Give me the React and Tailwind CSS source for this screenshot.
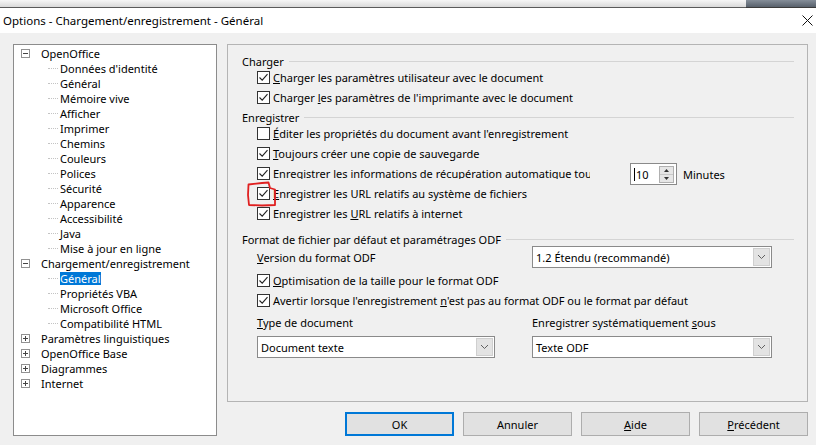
import React from "react";

function Check({ on }) {
  return (
    <span className="w-[13px] h-[13px] border border-[#333333] bg-white flex items-center justify-center shrink-0">
      {on && (
        <svg width="11" height="11" viewBox="0 0 11 11">
          <path d="M1.5 5.5 L4.2 8.2 L9.5 2.2" fill="none" stroke="#222" strokeWidth="1.1" />
        </svg>
      )}
    </span>
  );
}

function Row({ on, children, mt = "" }) {
  return (
    <div className={`h-[20px] flex items-center gap-[3px] pl-[15px] ${mt}`}>
      <Check on={on} />
      <span className="whitespace-nowrap">{children}</span>
    </div>
  );
}

function Group({ title, mt = "" }) {
  return (
    <div className={`h-[14px] flex items-center pr-[13px] ${mt}`}>
      <span className="whitespace-nowrap">{title}</span>
      <div className="flex-1 h-px bg-[#d4d4d4] ml-[5px]" />
    </div>
  );
}

function Chevron() {
  return (
    <svg width="9" height="6" viewBox="0 0 9 6">
      <path d="M1 1 L4.5 4.5 L8 1" fill="none" stroke="#606060" strokeWidth="1" />
    </svg>
  );
}

function Select({ value, w }) {
  return (
    <div className={`${w} h-[22px] border border-[#8a8a8a] bg-white flex items-center`}>
      <span className="flex-1 pl-[3px] whitespace-nowrap">{value}</span>
      <span className="w-[17px] h-[18px] mr-[1px] bg-[#e3e3e3] border border-[#cfcfcf] flex items-center justify-center">
        <Chevron />
      </span>
    </div>
  );
}

function Expander({ open }) {
  return (
    <span className="w-[9px] h-[9px] border border-[#919191] bg-white relative shrink-0 flex items-center justify-center">
      <span className="w-[5px] h-px bg-[#444]" />
      {!open && <span className="absolute w-px h-[5px] bg-[#444]" />}
    </span>
  );
}

const tree = [
  { t: "OpenOffice", top: true, open: true },
  { t: "Données d'identité" },
  { t: "Général" },
  { t: "Mémoire vive" },
  { t: "Afficher" },
  { t: "Imprimer" },
  { t: "Chemins" },
  { t: "Couleurs" },
  { t: "Polices" },
  { t: "Sécurité" },
  { t: "Apparence" },
  { t: "Accessibilité" },
  { t: "Java" },
  { t: "Mise à jour en ligne" },
  { t: "Chargement/enregistrement", top: true, open: true },
  { t: "Général", sel: true },
  { t: "Propriétés VBA" },
  { t: "Microsoft Office" },
  { t: "Compatibilité HTML" },
  { t: "Paramètres linguistiques", top: true },
  { t: "OpenOffice Base", top: true },
  { t: "Diagrammes", top: true },
  { t: "Internet", top: true },
];

function Btn({ children, primary }) {
  return (
    <button
      className={`w-[109px] h-[24px] bg-[#e1e1e1] flex items-center justify-center ${
        primary ? "border-2 border-[#0078d7]" : "border border-[#adadad]"
      }`}
    >
      {children}
    </button>
  );
}

export default function App() {
  return (
    <div className="w-[816px] h-[445px] bg-[#f0f0f0] font-['Noto_Sans','Open_Sans',sans-serif] text-[11px] text-black relative overflow-hidden leading-none">
      {/* top strip */}
      <div className="h-[8px] flex">
        <div className="flex-1 bg-gradient-to-b from-[#f6f6f6] to-[#d9d9d9] border-b border-[#5a5a5a]" />
        <div className="w-[70px] bg-gradient-to-b from-[#858e99] to-[#58616c] border-b border-[#3a3a3a]" />
      </div>
      {/* title bar */}
      <div className="h-[25px] bg-white flex items-center justify-between pl-[3px] pr-[3px]">
        <span className="text-[11.5px]">Options - Chargement/enregistrement - Général</span>
        <svg width="11" height="11" viewBox="0 0 11 11">
          <path d="M0.5 0.5 L10.5 10.5 M10.5 0.5 L0.5 10.5" stroke="#111" strokeWidth="1" />
        </svg>
      </div>

      {/* body */}
      <div className="flex gap-[10px] pl-[13px] pt-[11px]">
        {/* tree */}
        <div className="w-[204px] h-[392px] border border-[#8c8c8c] bg-white pt-[1px]">
          {tree.map((it, i) =>
            it.top ? (
              <div key={i} className="h-[15px] flex items-center pl-[7px]">
                <Expander open={it.open} />
                <span className="ml-[11px] whitespace-nowrap">{it.t}</span>
              </div>
            ) : (
              <div key={i} className="h-[15px] flex items-center pl-[34px]">
                <span className="w-[10px] border-t border-dotted border-[#c4c4c4]" />
                <span
                  className={`ml-[2px] whitespace-nowrap h-[13px] flex items-center ${
                    it.sel ? "bg-[#0078d7] text-white" : ""
                  }`}
                >
                  {it.t}
                </span>
              </div>
            )
          )}
        </div>

        {/* right column */}
        <div className="w-[581px] flex flex-col">
          <div className="h-[358px] border border-[#b4b4b4] pl-[14px] pt-[9px]">
            <Group title="Charger" />
            <Row on mt="mt-[-1px]">
              <u>C</u>harger les paramètres utilisateur avec le document
            </Row>
            <Row on>
              Charger <u>l</u>es paramètres de l'imprimante avec le document
            </Row>

            <Group title="Enregistrer" mt="mt-[3px]" />
            <Row mt="mt-[-1px]">
              <u>É</u>diter les propriétés du document avant l'enregistrement
            </Row>
            <Row on>
              <u>T</u>oujours créer une copie de sauvegarde
            </Row>
            <div className="h-[20px] flex items-center gap-[3px] pl-[15px]">
              <Check on />
              <span className="w-[317px] overflow-hidden whitespace-nowrap">
                Enregistrer les informations de récupération <u>a</u>utomatique toutes les
              </span>
              <div className="ml-[37px] w-[47px] h-[22px] border border-[#8a8a8a] bg-white flex items-center mt-[2px]">
                <span className="w-px h-[13px] bg-black ml-[3px]" />
                <span className="flex-1 ml-[1px]">10</span>
                <div className="w-[15px] h-[17px] mr-[2px] border border-[#b0b0b0] bg-[#e6e6e6] flex flex-col">
                  <div className="flex-1 flex items-center justify-center border-b border-[#c8c8c8]">
                    <svg width="5" height="3" viewBox="0 0 5 3">
                      <path d="M0 3 L2.5 0 L5 3 Z" fill="#333" />
                    </svg>
                  </div>
                  <div className="flex-1 flex items-center justify-center">
                    <svg width="5" height="3" viewBox="0 0 5 3">
                      <path d="M0 0 L2.5 3 L5 0 Z" fill="#333" />
                    </svg>
                  </div>
                </div>
              </div>
              <span className="ml-[3px] mt-[2px]">Minutes</span>
            </div>
            <Row on>
              <u>E</u>nregistrer les URL relatifs au système de fichiers
            </Row>
            <Row on>
              Enregistrer les <u>U</u>RL relatifs à internet
            </Row>

            <Group title="Format de fichier par défaut et paramétrages ODF" mt="mt-[9px]" />
            <div className="h-[22px] flex items-center pl-[15px]">
              <span className="w-[275px] whitespace-nowrap">
                <u>V</u>ersion du format ODF
              </span>
              <Select w="w-[240px]" value="1.2 Étendu (recommandé)" />
            </div>
            <Row on mt="mt-[2px]">
              <u>O</u>ptimisation de la taille pour le format ODF
            </Row>
            <Row on>
              Avertir lorsque l'enregistrement <u>n</u>'est pas au format ODF ou le format par défaut
            </Row>
            <div className="h-[14px] flex items-center pl-[15px] mt-[5px]">
              <span className="w-[275px] whitespace-nowrap">
                <u>T</u>ype de document
              </span>
              <span className="whitespace-nowrap">
                Enregistrer systématiquement <u>s</u>ous
              </span>
            </div>
            <div className="h-[22px] flex items-center pl-[15px] mt-[7px]">
              <div className="w-[275px]">
                <Select w="w-[238px]" value="Document texte" />
              </div>
              <Select w="w-[240px]" value="Texte ODF" />
            </div>
          </div>

          <div className="flex justify-end gap-[9px] mt-[10px]">
            <Btn primary>OK</Btn>
            <Btn>Annuler</Btn>
            <Btn>
              <u>A</u>ide
            </Btn>
            <Btn>
              <u>P</u>récédent
            </Btn>
          </div>
        </div>
      </div>

      {/* red hand-drawn annotation */}
      <svg className="absolute left-0 top-0 pointer-events-none" width="816" height="445">
        <path
          d="M248.5 184.5 L262 183 L268.5 182.5 L270 188 L275 189.5 L275 205 L262 205.5 L249 205 L248 195 Z"
          fill="none"
          stroke="#e02020"
          strokeWidth="1.8"
          strokeLinejoin="round"
        />
      </svg>
    </div>
  );
}
